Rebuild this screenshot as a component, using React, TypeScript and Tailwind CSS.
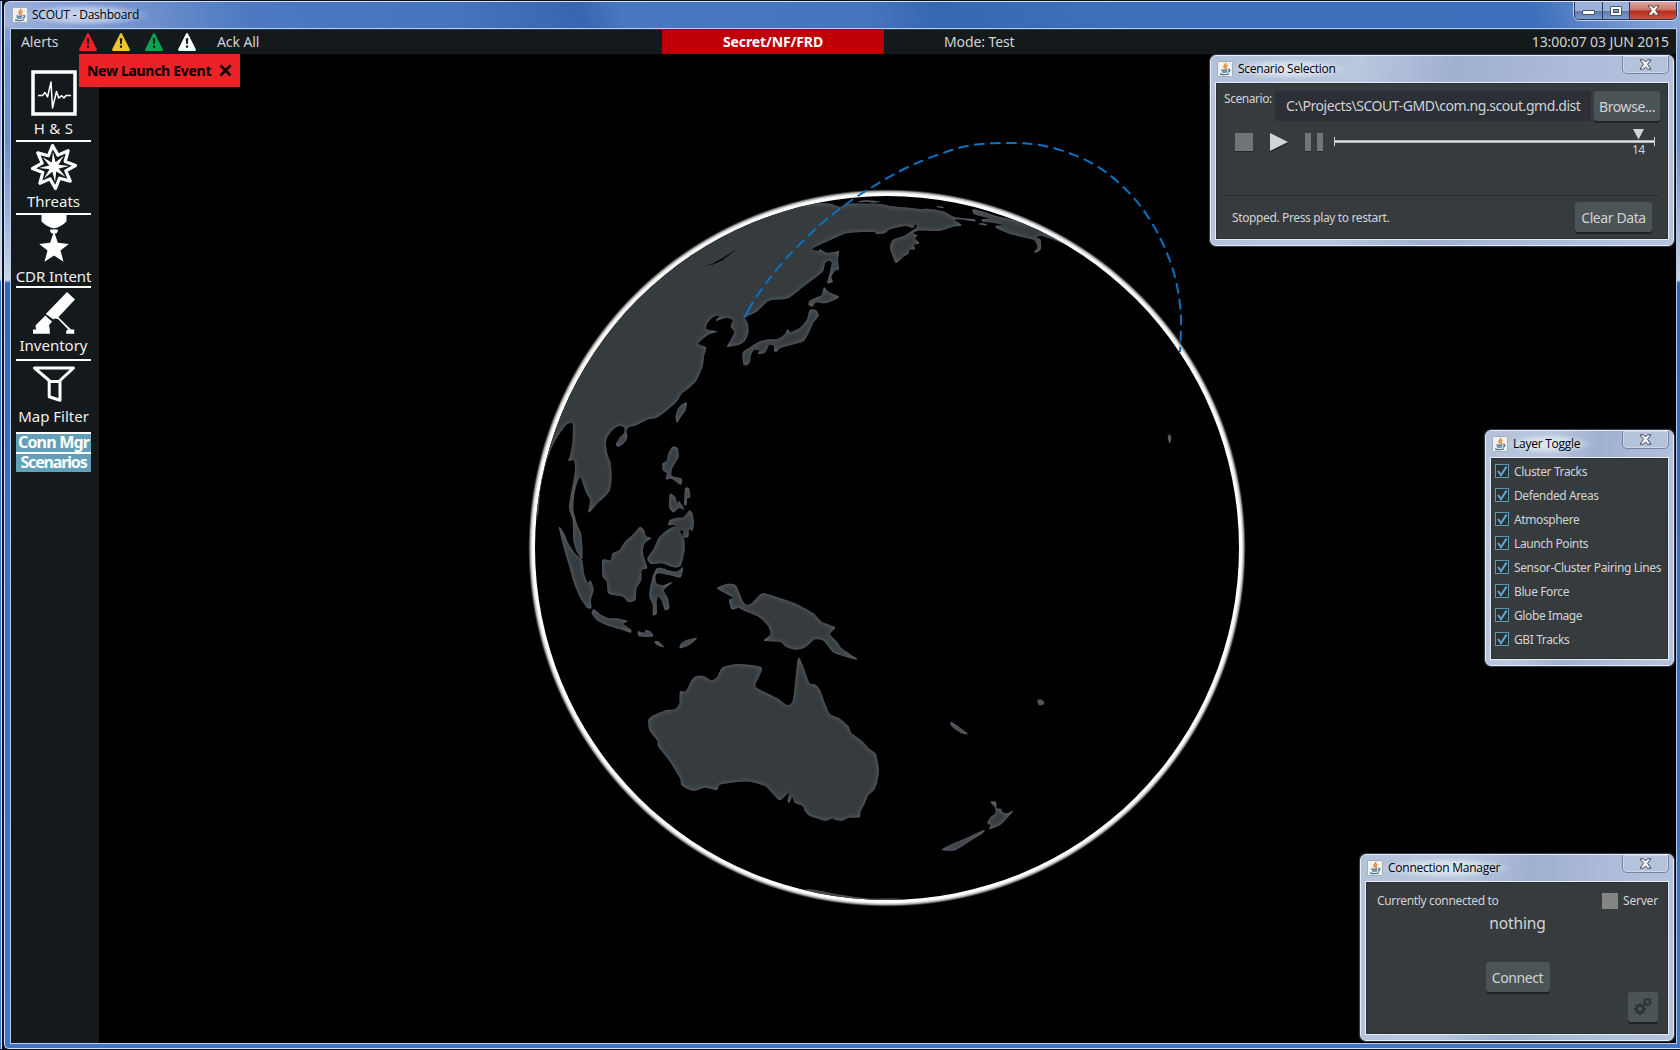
import React from "react";

type Pt = [number, number];

/** Smooth path through a flat list of coordinates. */
function curve(flat: number[], closed: boolean, k = 0.11): string {
  const p: Pt[] = [];
  for (let i = 0; i < flat.length; i += 2) p.push([flat[i], flat[i + 1]]);
  const n = p.length;
  const at = (i: number): Pt => (closed ? p[(i + n) % n] : p[Math.max(0, Math.min(n - 1, i))]);
  let d = `M${p[0][0]} ${p[0][1]}`;
  const last = closed ? n : n - 1;
  for (let i = 0; i < last; i++) {
    const [a, b, c, e] = [at(i - 1), at(i), at(i + 1), at(i + 2)];
    d += `C${b[0] + (c[0] - a[0]) * k} ${b[1] + (c[1] - a[1]) * k} ${c[0] - (e[0] - b[0]) * k} ${c[1] - (e[1] - b[1]) * k} ${c[0]} ${c[1]}`;
  }
  return closed ? d + "Z" : d;
}

const ASIA = [
  850, 74, 880, 70, 930, 71, 960, 80, 985, 71, 1075, 71, 1110, 78, 1150, 82, 1180, 85, 1205, 88, 1225, 86, 1270, 94, 1305, 112, 1360, 118, 1365, 124, 1320, 118,
  1305, 120, 1325, 136, 1300, 140, 1255, 153, 1195, 152, 1180, 160, 1192, 166, 1185, 175, 1198, 190, 1182, 195, 1185, 208, 1168, 210, 1165, 222, 1150, 230, 1128, 249,
  1115, 220, 1110, 200, 1118, 180, 1150, 168, 1188, 143, 1187, 132, 1178, 144, 1155, 138, 1110, 148, 1095, 160, 1070, 162, 1060, 156, 980, 160, 880, 205, 895, 213,
  900, 208, 920, 218, 948, 215, 957, 214, 954, 240, 957, 268, 945, 272, 934, 290, 938, 305, 922, 309, 930, 275, 935, 248, 925, 242, 915, 250, 910, 272, 890, 290,
  850, 320, 812, 350, 790, 358, 755, 360, 738, 368, 710, 395, 676, 412, 684, 432, 685, 460, 675, 482, 655, 495, 622, 500, 632, 480, 643, 455, 632, 440, 638, 420,
  620, 413, 588, 422, 598, 408, 580, 411, 562, 430, 560, 448, 591, 455, 565, 464, 535, 490, 558, 502, 552, 530, 548, 560, 530, 600, 510, 622, 485, 641, 470, 665,
  440, 692, 410, 713, 385, 718, 350, 735, 327, 742, 319, 752, 322, 772, 312, 790, 295, 800, 288, 792, 300, 772, 313, 758, 312, 742, 297, 738, 280, 748, 262, 772,
  258, 792, 263, 825, 272, 850, 275, 895, 270, 930, 255, 950, 235, 967, 220, 985, 205, 997, 210, 960, 197, 935, 181, 892, 170, 912, 162, 950, 160, 990, 165, 1010,
  172, 1035, 183, 1060, 187, 1100, 186, 1138, 170, 1115, 160, 1080, 158, 1020, 147, 985, 152, 945, 160, 905, 165, 870, 162, 842, 145, 842, 150, 828, 157, 790,
  158, 732, 138, 735, 110, 775, 92, 810, 78, 850, 62, 920, 52, 1010, 10, 1010, -20, 800, 100, 500, 350, 200, 600, 50, 850, 40,
];

// Landmasses, in thirds of a pixel from the map origin (520, 180).
const LAND: number[][] = [
  ASIA,
  // Alaska
  [1360, 88, 1390, 95, 1430, 108, 1480, 120, 1520, 130, 1600, 130, 1700, 210, 1640, 195, 1590, 175, 1562, 167, 1550, 172, 1562, 180, 1563, 205, 1555, 215, 1542, 217, 1552, 205, 1550, 192, 1541, 180, 1510, 172, 1470, 162, 1430, 145, 1428, 138, 1448, 135, 1420, 128, 1390, 125, 1385, 117, 1405, 115, 1362, 102],
  [1375, 132, 1390, 130, 1402, 135, 1392, 136],
  [1015, 64, 1040, 61, 1080, 65, 1060, 68, 1040, 66, 1018, 67],
  [1250, 79, 1270, 81, 1268, 84, 1254, 82],
  // Japan
  [912, 322, 925, 335, 957, 350, 938, 362, 915, 370, 888, 367, 878, 380, 866, 376, 868, 364, 890, 352, 905, 345],
  [878, 388, 890, 392, 896, 408, 880, 428, 868, 455, 850, 484, 810, 496, 782, 504, 770, 515, 762, 512, 762, 498, 748, 495, 740, 510, 732, 520, 714, 522, 718, 512, 702, 510, 693, 525, 690, 545, 680, 556, 670, 552, 668, 518, 690, 502, 715, 486, 745, 478, 775, 476, 795, 462, 803, 448, 812, 456, 840, 443, 860, 420, 868, 392],
  // Taiwan
  [500, 668, 497, 690, 482, 712, 471, 728, 467, 712, 472, 690, 482, 676],
  // Philippines
  [458, 800, 473, 804, 476, 830, 465, 850, 455, 870, 456, 888, 485, 896, 482, 914, 455, 896, 438, 898, 440, 880, 428, 870, 428, 850, 440, 842, 445, 820],
  [495, 926, 507, 925, 511, 952, 502, 955, 500, 972, 493, 974],
  [450, 942, 465, 950, 472, 968, 478, 964, 492, 988, 478, 984, 460, 997, 447, 980],
  [508, 992, 518, 1002, 522, 1030, 517, 1052, 507, 1048, 505, 1070, 490, 1072, 488, 1050, 475, 1056, 470, 1040, 460, 1035, 445, 1035, 450, 1020, 470, 1014, 490, 1012],
  // Borneo
  [360, 1041, 372, 1050, 378, 1068, 393, 1075, 374, 1090, 369, 1120, 382, 1163, 365, 1170, 364, 1200, 350, 1225, 346, 1260, 325, 1266, 308, 1250, 278, 1245, 264, 1238, 260, 1205, 248, 1190, 246, 1145, 252, 1138, 272, 1140, 278, 1120, 298, 1110, 315, 1085, 340, 1062],
  [465, 1038, 480, 1055, 492, 1075, 494, 1110, 482, 1157, 460, 1162, 425, 1150, 392, 1152, 382, 1135, 402, 1105, 415, 1075, 435, 1055],
  // Sulawesi
  [410, 1165, 425, 1164, 450, 1172, 472, 1174, 489, 1162, 482, 1192, 460, 1188, 415, 1180, 406, 1190, 410, 1210, 428, 1216, 458, 1206, 432, 1230, 444, 1255, 448, 1284, 435, 1290, 425, 1262, 415, 1250, 410, 1265, 411, 1300, 399, 1306, 398, 1275, 388, 1250, 390, 1225, 398, 1190],
  // Sumatra, Java and the smaller islands
  [117, 1042, 132, 1060, 145, 1090, 165, 1120, 187, 1142, 192, 1180, 203, 1208, 212, 1202, 221, 1228, 213, 1260, 214, 1284, 202, 1284, 180, 1252, 162, 1210, 148, 1160, 133, 1110],
  [222, 1288, 240, 1302, 265, 1315, 290, 1315, 322, 1323, 310, 1332, 332, 1348, 332, 1358, 300, 1348, 260, 1336, 230, 1320, 215, 1300],
  [354, 1354, 372, 1358, 378, 1350, 390, 1354, 400, 1368, 380, 1371, 356, 1368],
  [403, 1386, 415, 1384, 432, 1402, 412, 1396],
  [480, 1405, 482, 1392, 500, 1380, 531, 1374, 510, 1394],
  // New Guinea
  [592, 1224, 620, 1212, 645, 1214, 655, 1230, 668, 1262, 680, 1274, 695, 1270, 718, 1246, 732, 1240, 780, 1254, 830, 1272, 880, 1300, 905, 1325, 945, 1342, 930, 1362, 950, 1384, 965, 1405, 1012, 1438, 975, 1430, 940, 1417, 910, 1382, 885, 1378, 868, 1392, 850, 1405, 825, 1409, 800, 1402, 780, 1386, 732, 1382, 752, 1362, 742, 1335, 715, 1310, 672, 1292, 655, 1284, 635, 1288, 627, 1260, 640, 1254, 615, 1240],
  // Australia
  [838, 1434, 850, 1460, 868, 1508, 885, 1513, 900, 1530, 915, 1570, 930, 1602, 960, 1616, 985, 1638, 995, 1660, 1025, 1682, 1050, 1708, 1068, 1723, 1077, 1770, 1072, 1805, 1062, 1830, 1045, 1846, 1035, 1870, 1022, 1895, 1018, 1912, 985, 1914, 965, 1923, 942, 1918, 938, 1915, 915, 1922, 870, 1908, 855, 1894, 848, 1878, 825, 1868, 817, 1852, 808, 1868, 803, 1862, 806, 1838, 778, 1860, 738, 1820, 690, 1805, 650, 1806, 600, 1814, 590, 1830, 555, 1823, 525, 1832, 505, 1828, 484, 1815, 480, 1795, 450, 1745, 415, 1700, 412, 1683, 388, 1650, 385, 1620, 400, 1606, 440, 1590, 465, 1588, 478, 1570, 480, 1535, 498, 1533, 515, 1500, 530, 1488, 550, 1488, 575, 1501, 592, 1490, 608, 1462, 655, 1452, 725, 1463, 706, 1515, 722, 1530, 775, 1556, 795, 1572, 808, 1575, 819, 1560, 825, 1510, 832, 1445],
  // New Caledonia, Fiji and Hawaii
  [1291, 1626, 1305, 1632, 1343, 1661, 1325, 1660, 1296, 1640],
  [1552, 1561, 1564, 1559, 1572, 1566, 1569, 1574, 1557, 1575],
  [1943, 772, 1949, 762, 1954, 774, 1949, 790],
  // New Zealand
  [1411, 1866, 1428, 1866, 1430, 1885, 1442, 1886, 1448, 1896, 1460, 1900, 1480, 1892, 1465, 1910, 1440, 1935, 1408, 1948, 1412, 1936, 1402, 1928, 1412, 1912, 1426, 1900, 1425, 1882],
  [1392, 1950, 1385, 1962, 1355, 1980, 1325, 2000, 1300, 2012, 1266, 2009, 1290, 1995, 1330, 1978],
  // Antarctica
  [860, 2128, 960, 2144, 1050, 2156, 1150, 2158, 1150, 2200, 860, 2180],
];

const TRACK = curve(
  [745, 317, 757, 296, 783, 262, 820, 225, 855, 198, 900, 171, 940, 154, 973, 145, 1013, 143, 1047, 146.5, 1080, 157.5, 1107, 173, 1133, 197, 1150, 220, 1163, 244, 1173, 270, 1179, 297, 1181, 322, 1180, 352],
  false,
  0.166,
);

function Globe() {
  return (
    <svg className="block h-full w-full" viewBox="99 54 1577 989">
      <defs>
        <radialGradient id="rim" gradientUnits="userSpaceOnUse" cx="887" cy="548" r="359">
          <stop offset="0.979" stopColor="#fff" />
          <stop offset="0.988" stopColor="#fbfbfb" />
          <stop offset="0.994" stopColor="#a0a09e" />
          <stop offset="0.9985" stopColor="#222" stopOpacity="0.6" />
          <stop offset="1" stopColor="#000" stopOpacity="0" />
        </radialGradient>
        <clipPath id="disc">
          <circle cx="887" cy="548" r="352" />
        </clipPath>
        <filter id="shore" filterUnits="userSpaceOnUse" x="480" y="150" width="800" height="800" colorInterpolationFilters="sRGB">
          <feComponentTransfer in="SourceAlpha" result="sea">
            <feFuncA type="linear" slope="-1" intercept="1" />
          </feComponentTransfer>
          <feGaussianBlur in="sea" stdDeviation="2.6" result="soft" />
          <feFlood floodColor="#646b74" />
          <feComposite in2="soft" operator="in" />
          <feComposite in2="SourceAlpha" operator="in" result="glow" />
          <feMerge>
            <feMergeNode in="SourceGraphic" />
            <feMergeNode in="glow" />
          </feMerge>
        </filter>
      </defs>
      <circle cx="887" cy="548" r="359" fill="url(#rim)" />
      <circle cx="887" cy="548" r="352" fill="#000" />
      <g clipPath="url(#disc)">
        <g filter="url(#shore)">
          <g transform="translate(520 180) scale(0.33333)" fill="#363b3e">
            {LAND.map((l, i) => (
              <path key={i} d={curve(l, true)} />
            ))}
          </g>
        </g>
        <path d="M705 265.700L712 264L722 258.500L737 249L722 260.500L713 264.500Z" fill="#000" />
      </g>
      <path d={TRACK} fill="none" stroke="#0873c2" strokeWidth="2" strokeDasharray="10.500 5.500" strokeDashoffset="-7" />
      <path d="M745 317L752 303" stroke="#0873c2" strokeWidth="2" />
    </svg>
  );
}

function JavaIcon() {
  return (
    <svg width="16" height="16" viewBox="0 0 16 16" className="shrink-0">
      <rect x="0.500" y="0.500" width="15" height="15" rx="1" fill="#eef0f1" stroke="#a6adb3" />
      <path d="M8.600 1.800c1.200 1.600-2.600 2.600-1.600 4.200.3.600.8 1 .8 1.600M10.400 4.200c-1.800.8-2 1.600-1.200 2.600.4.600.2 1-.4 1.400" fill="none" stroke="#e8791d" strokeWidth="1.300" />
      <path d="M4.300 8.700c1 .7 5 .7 6.200 0M5 10.600c1.400.5 3.800.5 5 0M3 12.800c2.400 1.200 7.200 1.200 9 0M11.200 8.600c2.200-.6 2.200 1.800-.4 2.400" fill="none" stroke="#4e7896" strokeWidth="1.300" />
    </svg>
  );
}

function CloseGlyph({ light = false }: { light?: boolean }) {
  return (
    <svg width="13" height="11" viewBox="0 0 13 11">
      <path d="M1 .8h3.600L6.500 3 8.400.8H12L8.600 5.300l3.400 4.900H8.400L6.500 7.900l-1.900 2.300H1l3.400-4.900z" fill={light ? "#fff" : "#f4f4f6"} stroke={light ? "#5b3a40" : "#454a58"} strokeWidth="1" />
    </svg>
  );
}

function ToolWindow({ title, className, children }: { title: string; className: string; children: React.ReactNode }) {
  return (
    <section
      className={`absolute flex flex-col rounded-[6px] border border-[#e4ecf8] bg-[linear-gradient(100deg,#b3c2da_0%,#b9c8de_30%,#9fb0d0_50%,#adbdd9_75%,#b5c3dd_100%)] px-[4px] pb-[5px] shadow-[0_0_1px_1px_#39404c] ${className}`}
    >
      <header className="flex h-[26px] shrink-0 items-start">
        <div className="flex h-full items-center gap-[5px] pl-[2px]">
          <JavaIcon />
          <span className="-ml-2 bg-[radial-gradient(closest-side,rgba(255,255,255,.6),rgba(255,255,255,.4)_60%,rgba(255,255,255,0))] pr-3 pl-2 font-['Open_Sans','Noto_Sans',sans-serif] text-[12px] leading-[20px] tracking-[-0.250px] whitespace-nowrap text-black">{title}</span>
        </div>
        <div className="ml-auto flex h-[18px] w-[47px] items-center justify-center rounded-b-[5px] border border-t-0 border-[#76839c] bg-[#b4c2dc] pb-px shadow-[inset_0_0_0_1px_rgba(255,255,255,.35)]">
          <CloseGlyph />
        </div>
      </header>
      <div className="min-h-0 flex-1 border border-[#e8eef8] bg-[#363b3e] text-[#d2d3d4] shadow-[inset_0_0_0_1px_#2b3034]">{children}</div>
    </section>
  );
}

const BTN = "flex h-[30px] items-center justify-center rounded-[3px] bg-[#4b5457] text-[14px] tracking-[-0.400px] text-[#d2d3d4] shadow-[0_2px_0_#202326] whitespace-nowrap";

function Warn({ fill }: { fill: string }) {
  return (
    <svg width="18" height="18" viewBox="0 0 18 18">
      <path d="M9 1.200L16.800 16.800H1.200Z" fill={fill} stroke={fill} strokeWidth="2.200" strokeLinejoin="round" />
      <path d="M7.700 5.200h2.600l-.5 5.800H8.200zM7.900 12.400h2.200v2.300H7.900z" fill="#14191c" />
    </svg>
  );
}

function starPoints(cx: number, cy: number, n: number, r1: number, r2: number, rot = -90) {
  return Array.from({ length: n * 2 }, (_, i) => {
    const r = i % 2 ? r2 : r1;
    const a = ((rot + (i * 180) / n) * Math.PI) / 180;
    return `${(cx + r * Math.cos(a)).toFixed(2)},${(cy + r * Math.sin(a)).toFixed(2)}`;
  }).join(" ");
}

const PulseIcon = (
  <svg width="46" height="46" viewBox="0 0 46 46" fill="none" stroke="#fff">
    <rect x="2" y="2" width="42" height="42" strokeWidth="3.500" />
    <path d="M7 25.500h4.500l2.500-3 2.500 4.500L20 12l1.500 26 4-16.500 2.200 6.500 3-2.300L33 28l2-2.500h5" strokeWidth="1.500" strokeLinejoin="round" />
  </svg>
);

const BurstIcon = (
  <svg width="46" height="48" viewBox="0 0 46 48">
    <polygon points={starPoints(23, 24, 8, 21.500, 12.500, -94)} fill="none" stroke="#fff" strokeWidth="3.200" strokeLinejoin="round" />
    <polygon points={starPoints(23, 24, 8, 15, 5, -94)} fill="#fff" />
  </svg>
);

const MedalIcon = (
  <svg width="30" height="48" viewBox="0 0 30 48" fill="#fff">
    <path d="M2.500 0h25v6.500Q22 12 15 13.500Q8 12 2.500 6.500ZM11.200 14.500h7.600v2l-1.500 2h-4.600l-1.500-2z" />
    <path d="M15 16.500l3.900 11.200 10.900 1.200-8.300 6.600 3 11.300L15 40.400l-9.500 6.400 3-11.300L.2 28.900l10.900-1.200z" />
  </svg>
);

const LauncherIcon = (
  <svg width="42" height="42" viewBox="0 0 42 42" fill="#fff">
    <path d="M34 0l8 7.500L25.500 25l1.200 1.500L38 37.500h3.200v4.200h-8v-3l2-1.200L25 27l-3.500-.6-1 1.100-7.700-5.500zM12.300 23.500L19 29.500l-3 3.800.8 4.200v4.200H0v-4.200h3l-.5-4z" />
  </svg>
);

const FunnelIcon = (
  <svg width="44" height="38" viewBox="0 0 44 38" fill="none" stroke="#fff" strokeWidth="3" strokeLinejoin="round">
    <path d="M2.500 3h39L28 15.500v19.700l-10.800-3.500V15.500zM17 16.500h11" />
  </svg>
);

function NavItem({ icon, label, iconClass, labelClass }: { icon: React.ReactNode; label: string; iconClass: string; labelClass: string }) {
  return (
    <div className="flex h-[73px] w-[75px] flex-col items-center overflow-visible border-b-2 border-white">
      <div className={`shrink-0 ${iconClass}`}>{icon}</div>
      <div className={`mt-auto text-[15px] leading-[20px] whitespace-nowrap text-[#f0f0f0] ${labelClass}`}>{label}</div>
    </div>
  );
}

const LAYERS = ["Cluster Tracks", "Defended Areas", "Atmosphere", "Launch Points", "Sensor-Cluster Pairing Lines", "Blue Force", "Globe Image", "GBI Tracks"];

function ScenarioWindow() {
  return (
    <ToolWindow title="Scenario Selection" className="top-[55px] left-[1210px] h-[191px] w-[464px]">
      <div className="flex h-full flex-col px-[8px] pt-[8px]">
        <div className="flex items-start">
          <span className="w-[51px] shrink-0 text-[12px] leading-[16px] tracking-[-0.450px] whitespace-nowrap">Scenario:</span>
          <div className="h-[30px] w-[316px] shrink-0 rounded-[3px] bg-[#2c2f36] px-[11px] text-[14px] leading-[30px] tracking-[-0.440px] whitespace-nowrap">
            C:\Projects\SCOUT-GMD\com.ng.scout.gmd.dist
          </div>
          <div className={`ml-[3px] w-[66px] ${BTN}`}>Browse...</div>
        </div>
        <div className="mt-[6px] flex h-[44px] items-start pl-[11px]">
          <svg width="90" height="28" viewBox="0 0 90 28" className="shrink-0">
            <path d="M0 7h18v18H0zM70 7h6v18h-6zM82 7h6v18h-6z" fill="#25292b" />
            <path d="M0 6h18v18H0zM70 6h6v18h-6zM82 6h6v18h-6z" fill="#727577" />
            <path d="M35 7.500l18 9-18 9z" fill="#202325" />
            <path d="M35 6l18 9-18 9z" fill="#d2d3d4" />
          </svg>
          <div className="ml-[8px] flex w-[324px] flex-col">
            <svg width="324" height="20" viewBox="0 0 324 20">
              <path d="M1.500 10v9M321.500 10v9" stroke="#d2d3d4" />
              <path d="M1 14.500h321" stroke="#b4b6b7" strokeWidth="3" />
              <path d="M1 14.500h321" stroke="#e2e2e2" strokeWidth="1" />
              <path d="M300 2h11l-5.500 10.500z" fill="#d2d3d4" />
            </svg>
            <span className="mt-[-5px] ml-[299px] text-[12px] leading-[16px] tracking-[-0.500px]">14</span>
          </div>
        </div>
        <div className="mt-[24px] h-px w-[436px] bg-[#2a2e30]" />
        <div className="mt-[6px] flex items-center justify-between pr-[8px] pl-[8px]">
          <span className="pt-[2px] text-[12px] tracking-[-0.370px]">Stopped. Press play to restart.</span>
          <div className={`w-[77px] ${BTN}`}>Clear Data</div>
        </div>
      </div>
    </ToolWindow>
  );
}

function LayerWindow() {
  return (
    <ToolWindow title="Layer Toggle" className="top-[430px] left-[1485px] h-[236px] w-[189px]">
      <div className="flex flex-col pt-[2px] pl-[4px]">
        {LAYERS.map((name) => (
          <div key={name} className="flex h-[24px] items-center gap-[5px]">
            <svg width="14" height="15" viewBox="0 0 14 15" className="mt-[-2px] shrink-0">
              <rect x="0.500" y="0.500" width="13" height="13" fill="#2b2f36" stroke="#5b9bb3" />
              <path d="M3 7l3 4.200L11.500 2.500" fill="none" stroke="#68aac4" strokeWidth="2" />
            </svg>
            <span className="text-[12px] leading-[20px] tracking-[-0.390px] whitespace-nowrap">{name}</span>
          </div>
        ))}
      </div>
    </ToolWindow>
  );
}

function GearGlyph({ cx, cy, r }: { cx: number; cy: number; r: number }) {
  return (
    <g>
      <circle cx={cx} cy={cy} r={r * 0.62} fill="none" stroke="#2f3335" strokeWidth={r * 0.42} />
      {Array.from({ length: 8 }, (_, i) => (
        <rect key={i} x={cx - r * 0.17} y={cy - r * 1.08} width={r * 0.34} height={r * 0.4} fill="#2f3335" transform={`rotate(${i * 45} ${cx} ${cy})`} />
      ))}
    </g>
  );
}

function ConnectionWindow() {
  return (
    <ToolWindow title="Connection Manager" className="top-[854px] left-[1360px] h-[187px] w-[314px]">
      <div className="flex h-full flex-col pr-[10px] pl-[11px]">
        <div className="mt-[10px] flex h-[18px] items-center text-[12px] tracking-[-0.350px]">
          <span>Currently connected to</span>
          <span className="mr-[5px] ml-auto size-[16px] bg-[#858585]" />
          <span className="w-[35px] tracking-[-0.200px]">Server</span>
        </div>
        <div className="mt-[2px] text-center text-[15.500px] leading-[22px] tracking-[-0.100px]">nothing</div>
        <div className={`mx-auto mt-[28px] w-[64px] ${BTN}`}>Connect</div>
        <div className={`ml-auto w-[30px] ${BTN}`}>
          <svg width="20" height="18" viewBox="0 0 20 18">
            <GearGlyph cx={7} cy={11} r={5.600} />
            <GearGlyph cx={14.500} cy={4} r={4.300} />
          </svg>
        </div>
      </div>
    </ToolWindow>
  );
}

export default function App() {
  return (
    <div className="relative flex h-[1050px] w-[1680px] overflow-hidden bg-[#0a1324] pt-px pb-px font-['Noto_Sans','Open_Sans',sans-serif]">
      <div className="mr-[2px] w-[2px] shrink-0 border-r border-[#dbe6f5] bg-[linear-gradient(180deg,#6f8fcb_0px,#cdd9ec_278px,#3c6cb8_281px,#4273c2_100%)]" />
      <div className="flex min-w-0 flex-1 flex-col rounded-tl-[6px] rounded-bl-[5px] border border-r-0 border-[#d4e0f2] bg-[linear-gradient(180deg,#a3b4da_0px,#6e8fcc_50px,#6b8dca_140px,#c9d6ea_278px,#3566b2_281px,#3b6bba_460px,#4474c4_100%)] pr-[3px] pb-[4px] pl-[5px]">
        <header className="-mr-[3px] -ml-[5px] flex h-[26px] shrink-0 items-start rounded-tl-[5px] bg-[linear-gradient(75deg,#9db0db_0px,#7f9bd2_90px,#4c79c1_240px,#4676bd_420px,#3866b0_560px,#4878c0_600px,#4676be_830px,#3768b2_900px,#3d6fbb_1080px,#3d6fbc_1480px,#7f9fd6_1590px,#9fb6e0_1680px)] pl-[7px]">
          <div className="flex h-full items-center gap-[4px]">
            <JavaIcon />
            <span className="-ml-3 bg-[radial-gradient(closest-side,rgba(255,255,255,.6),rgba(255,255,255,.4)_60%,rgba(255,255,255,0))] pr-3 pl-3 font-['Open_Sans','Noto_Sans',sans-serif] text-[12px] leading-[22px] tracking-[-0.220px] whitespace-nowrap text-black">SCOUT - Dashboard</span>
          </div>
          <div className="mr-[3px] ml-auto flex h-[18px] overflow-hidden rounded-b-[5px] border border-t-0 border-[#2b3650] shadow-[0_0_0_1px_rgba(225,235,250,.75)]">
            <div className="flex w-[28px] items-end justify-center border-r border-[#2b3650] bg-[linear-gradient(180deg,#9db1d8_50%,#5877ab_51%,#7f9cd0)] pb-[4px]">
              <span className="h-[5px] w-[13px] rounded-[1px] border border-[#4b5260] bg-white" />
            </div>
            <div className="flex w-[27px] items-center justify-center border-r border-[#2b3650] bg-[linear-gradient(180deg,#9db1d8_50%,#5877ab_51%,#7f9cd0)]">
              <span className="flex h-[10px] w-[12px] items-center justify-center rounded-[1px] border border-[#4b5260] bg-white">
                <span className="h-[4px] w-[6px] border border-[#4b5260] bg-[#7d98c8]" />
              </span>
            </div>
            <div className="flex w-[46px] items-center justify-center bg-[linear-gradient(180deg,#dba59f_0%,#cd7468_48%,#b42d1b_52%,#c85440_100%)]">
              <CloseGlyph light />
            </div>
          </div>
        </header>

        <div className="flex min-h-0 flex-1 flex-col border border-[#b9cdea] bg-black">
          <div className="flex h-[25px] shrink-0 items-center border-t border-[#27384f] bg-[#14191c] text-[14px] leading-[24px] text-[#d2d3d4]">
            <div className="flex w-[651px] items-center pl-[10px]">
              <span className="w-[58px] tracking-[-0.100px]">Alerts</span>
              <div className="flex gap-[15px] pt-[2px] pb-[2px]">
                <Warn fill="#ec2227" />
                <Warn fill="#f2c52c" />
                <Warn fill="#0aa34f" />
                <Warn fill="#ffffff" />
              </div>
              <span className="ml-[21px] tracking-[-0.100px]">Ack All</span>
            </div>
            <div className="h-full w-[222px] bg-[#be0006] text-center text-[14px] font-bold tracking-[-0.100px] text-white">Secret/NF/FRD</div>
            <span className="ml-[60px] tracking-[-0.100px]">Mode: Test</span>
            <span className="mr-[7px] ml-auto tracking-[-0.100px]">13:00:07 03 JUN 2015</span>
          </div>

          <div className="flex min-h-0 flex-1">
            <nav className="flex w-[88px] shrink-0 flex-col bg-[#14191c] pt-[15px] pl-[5px]">
              <NavItem icon={PulseIcon} label="H & S" iconClass="mt-px" labelClass="mb-[2px] tracking-[0.300px]" />
              <NavItem icon={BurstIcon} label="Threats" iconClass="mt-px" labelClass="mb-[2px] -mt-1" />
              <NavItem icon={MedalIcon} label="CDR Intent" iconClass="mt-0" labelClass="mb-0 tracking-[-0.100px]" />
              <NavItem icon={LauncherIcon} label="Inventory" iconClass="mt-[4px]" labelClass="mb-[4px]" />
              <NavItem icon={FunnelIcon} label="Map Filter" iconClass="mt-[4px]" labelClass="mb-[6px]" />
              <div className="flex h-[20px] w-[75px] justify-center border-b-2 border-white bg-[#62a0b9] text-[16px] leading-[17px] font-bold tracking-[-0.800px] whitespace-nowrap text-white">Conn Mgr</div>
              <div className="flex h-[18px] w-[75px] justify-center bg-[#62a0b9] text-[16px] leading-[17px] font-bold tracking-[-1.150px] whitespace-nowrap text-white">Scenarios</div>
            </nav>
            <main className="min-w-0 flex-1 overflow-hidden">
              <Globe />
            </main>
          </div>
        </div>
      </div>

      <div className="absolute top-[54px] left-[79px] flex h-[33px] w-[161px] items-center gap-[8px] bg-[#ec2227] pl-[8px] text-[14px] font-bold whitespace-nowrap text-black">
        <span className="tracking-[-0.290px]">New Launch Event</span>
        <svg width="13" height="13" viewBox="0 0 13 13">
          <path d="M1.500 1.500l10 10M11.500 1.500l-10 10" stroke="#000" strokeWidth="2.500" />
        </svg>
      </div>

      <ScenarioWindow />
      <LayerWindow />
      <ConnectionWindow />
    </div>
  );
}
